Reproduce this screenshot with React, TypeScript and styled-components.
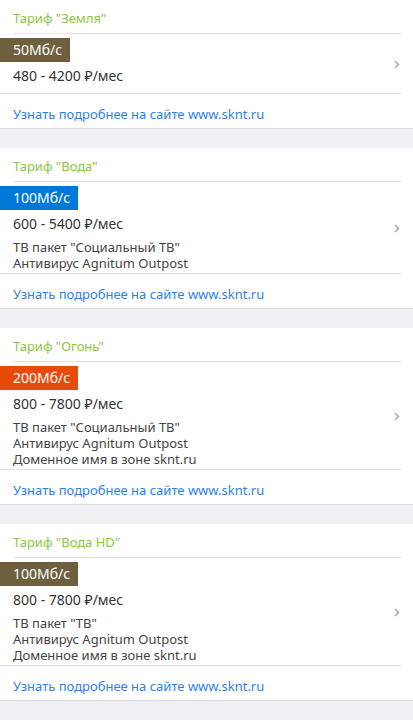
import React from 'react';
import styled, { createGlobalStyle } from 'styled-components';

type Tariff = {
  name: string;
  speed: string;
  badge: string;
  price: string;
  features: string[];
};

const tariffs: Tariff[] = [
  { name: 'Тариф "Земля"', speed: '50Мб/с', badge: '#6e5f3e', price: '480 - 4200 ₽/мес', features: [] },
  {
    name: 'Тариф "Вода"',
    speed: '100Мб/с',
    badge: '#0078d7',
    price: '600 - 5400 ₽/мес',
    features: ['ТВ пакет "Социальный ТВ"', 'Антивирус Agnitum Outpost'],
  },
  {
    name: 'Тариф "Огонь"',
    speed: '200Мб/с',
    badge: '#e84a0c',
    price: '800 - 7800 ₽/мес',
    features: ['ТВ пакет "Социальный ТВ"', 'Антивирус Agnitum Outpost', 'Доменное имя в зоне sknt.ru'],
  },
  {
    name: 'Тариф "Вода HD"',
    speed: '100Мб/с',
    badge: '#6e5f3e',
    price: '800 - 7800 ₽/мес',
    features: ['ТВ пакет "ТВ"', 'Антивирус Agnitum Outpost', 'Доменное имя в зоне sknt.ru'],
  },
];

const GlobalStyle = createGlobalStyle`
  html, body {
    margin: 0;
    padding: 0;
    background: #efeff4;
  }
  body {
    font-family: "Noto Sans", "Open Sans", sans-serif;
    font-size: 13px;
    color: #333;
  }
`;

const List = styled.div`
  display: flex;
  flex-direction: column;
  gap: 19px;
  padding-bottom: 20px;
`;

const Card = styled.section`
  background: #fff;
  border-bottom: 1px solid #dcdce2;
`;

const Title = styled.div`
  margin: 0 12px 0 13px;
  padding: 10px 0 6px;
  line-height: 17px;
  font-size: 13px;
  color: #8cc63f;
  border-bottom: 1px solid #e2e2e2;
`;

const Body = styled.div`
  display: flex;
  align-items: center;
  margin-right: 12px;
  padding: 4px 0 2px;
  border-bottom: 1px solid #e2e2e2;
`;

const Info = styled.div`
  flex: 1;
  display: flex;
  flex-direction: column;
`;

const Badge = styled.div<{ $bg: string }>`
  align-self: flex-start;
  height: 24px;
  line-height: 24px;
  padding: 0 8px 0 13px;
  background: ${(p) => p.$bg};
  color: #fff;
  font-size: 14px;
`;

const Price = styled.div`
  margin: 4px 0 5px 13px;
  line-height: 20px;
  font-size: 14px;
  color: #333;
`;

const Feature = styled.div`
  margin-left: 13px;
  line-height: 16px;
  font-size: 13px;
  color: #444;
`;

const Chevron = styled.svg`
  width: 6px;
  height: 9px;
  flex: none;
  margin-right: 1px;
`;

const Link = styled.a`
  display: block;
  margin: 0 13px;
  padding: 12px 0 6px;
  line-height: 16px;
  font-size: 13px;
  color: #2f80ea;
  text-decoration: none;
`;

const App: React.FC = () => {
  return (
    <>
      <GlobalStyle />
      <List>
        {tariffs.map((t) => (
          <Card key={t.name}>
            <Title>{t.name}</Title>
            <Body>
              <Info>
                <Badge $bg={t.badge}>{t.speed}</Badge>
                <Price>{t.price}</Price>
                {t.features.map((f) => (
                  <Feature key={f}>{f}</Feature>
                ))}
              </Info>
              <Chevron viewBox="0 0 6 9">
                <path d="M1 1l3.5 3.5L1 8" fill="none" stroke="#a3a3a8" strokeWidth="1.4" />
              </Chevron>
            </Body>
            <Link href="#">Узнать подробнее на сайте www.sknt.ru</Link>
          </Card>
        ))}
      </List>
    </>
  );
};

export default App;
